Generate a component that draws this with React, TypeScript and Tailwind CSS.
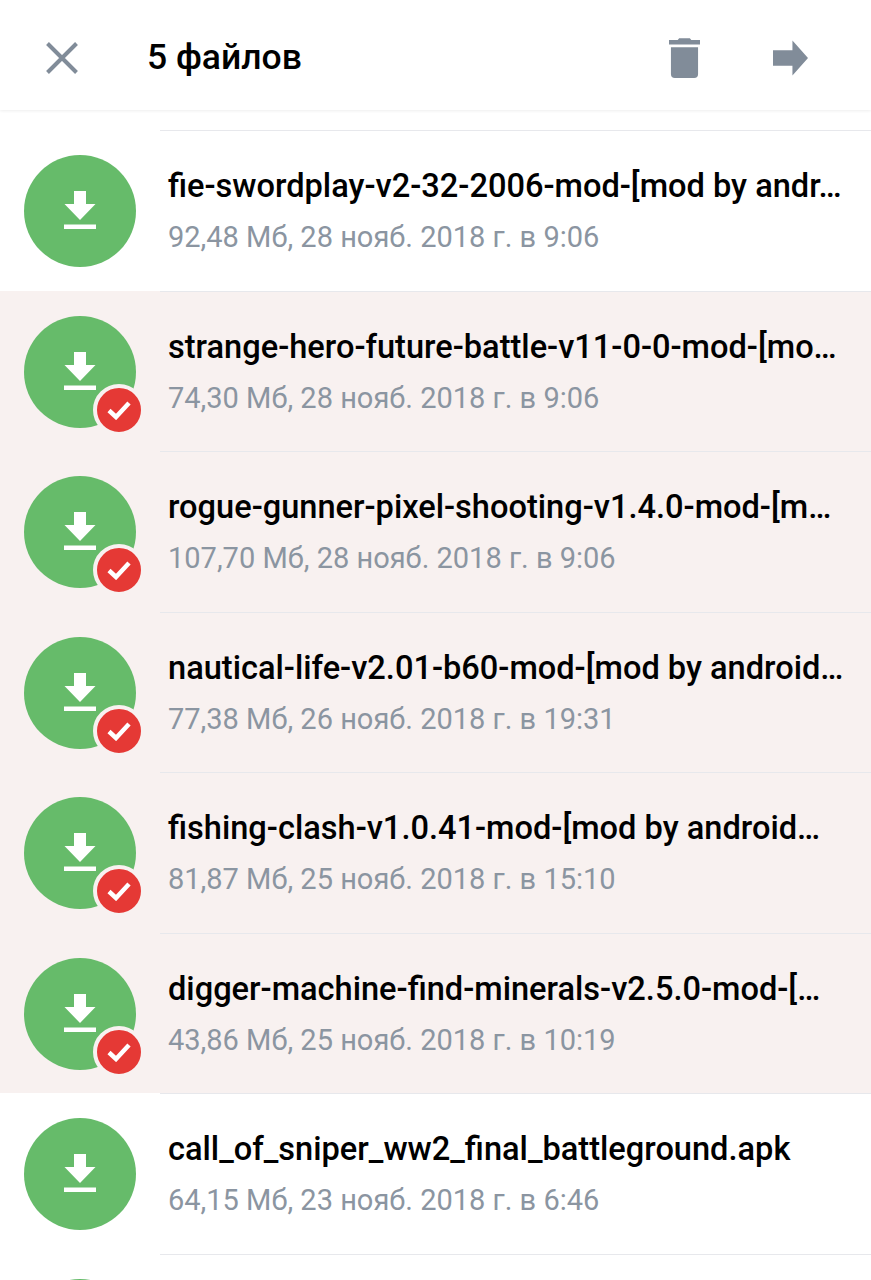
const files = [
  { name: 'fie-swordplay-v2-32-2006-mod-[mod by andr…', meta: '92,48 Мб, 28 нояб. 2018 г. в 9:06', selected: false },
  { name: 'strange-hero-future-battle-v11-0-0-mod-[mo…', meta: '74,30 Мб, 28 нояб. 2018 г. в 9:06', selected: true },
  { name: 'rogue-gunner-pixel-shooting-v1.4.0-mod-[m…', meta: '107,70 Мб, 28 нояб. 2018 г. в 9:06', selected: true },
  { name: 'nautical-life-v2.01-b60-mod-[mod by android…', meta: '77,38 Мб, 26 нояб. 2018 г. в 19:31', selected: true },
  { name: 'fishing-clash-v1.0.41-mod-[mod by android…', meta: '81,87 Мб, 25 нояб. 2018 г. в 15:10', selected: true },
  { name: 'digger-machine-find-minerals-v2.5.0-mod-[…', meta: '43,86 Мб, 25 нояб. 2018 г. в 10:19', selected: true },
  { name: 'call_of_sniper_ww2_final_battleground.apk', meta: '64,15 Мб, 23 нояб. 2018 г. в 6:46', selected: false },
  { name: '', meta: '', selected: false },
];

function FileIcon({ selected }: { selected: boolean }) {
  return (
    <div className="relative flex h-[112px] w-[112px] items-center justify-center rounded-full bg-[#66bb6a]">
      <svg width="32" height="38" viewBox="0 0 32 38" fill="#fff" className="-mt-[2px]">
        <path d="M10 0h12v13h9.5L16 29 0.5 13H10z" />
        <rect x="0" y="33.5" width="32" height="4.5" />
      </svg>
      {selected && (
        <div className="absolute left-[69px] top-[68px] flex h-[52px] w-[52px] items-center justify-center rounded-full border-[4px] border-[#f8f1f0] bg-[#e53935]">
          <svg width="24" height="20" viewBox="0 0 24 20" fill="none" stroke="#fff" strokeWidth="4.5">
            <path d="M2 10.5l7 6.5L22 3" />
          </svg>
        </div>
      )}
    </div>
  );
}

export default function App() {
  return (
    <div className="h-[1280px] w-[871px] overflow-hidden bg-white font-['Roboto',sans-serif]">
      <div className="relative flex h-[110px] items-center bg-white pl-[45px] pr-[63px] pt-[6px] shadow-[0_1px_3px_rgba(0,0,0,0.07)]">
        <svg width="34" height="34" viewBox="0 0 34 34" fill="none" stroke="#818c99" strokeWidth="4">
          <path d="M2.5 2.5l29 29M31.5 2.5l-29 29" />
        </svg>
        <div className="ml-[68px] flex-1 text-[35.5px] font-medium leading-none text-black">5 файлов</div>
        <svg width="31" height="41" viewBox="0 0 32 42" fill="#818c99">
          <path d="M10.5 0h11l1.5 2h9v4.5H0V2h9z" />
          <path d="M2 9.5h28V37a4 4 0 0 1-4 4H6a4 4 0 0 1-4-4z" />
        </svg>
        <svg width="35" height="36" viewBox="0 0 36 36" fill="#818c99" className="ml-[73px]">
          <path d="M0 10h20V0l16 18-16 18V26H0z" />
        </svg>
      </div>
      <div className="pt-[20px]">
        {files.map((file, i) => (
          <div key={i} className={`flex h-[160.5px] ${file.selected ? 'bg-[#f8f1f0]' : 'bg-white'}`}>
            <div className="w-[160px] shrink-0 pl-[24px] pt-[25px]">
              <FileIcon selected={file.selected} />
            </div>
            <div className="min-w-0 flex-1 border-t border-[#e7e8ec] pl-[8px]">
              <div className="mt-[34px] h-[42px] whitespace-nowrap text-[32.6px] font-medium leading-[42px] text-black">{file.name}</div>
              <div className="mt-[9px] whitespace-nowrap text-[29px] leading-[42px] text-[#8b95a1]">{file.meta}</div>
            </div>
          </div>
        ))}
      </div>
    </div>
  );
}
